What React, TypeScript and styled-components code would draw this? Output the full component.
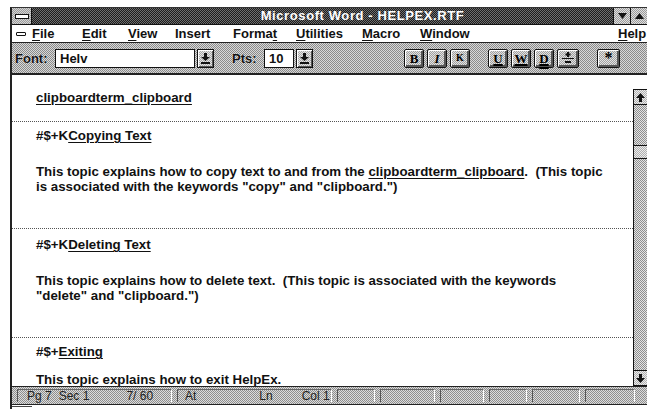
import React from 'react';
import styled, { createGlobalStyle, css } from 'styled-components';

// 1px checkerboard, the way Windows 3.x fakes mid greys
const dither = (a: string, b: string) => css`
  background: repeating-conic-gradient(${a} 0 25%, ${b} 0 50%) 0 0 / 2px 2px;
`;

const GlobalStyle = createGlobalStyle`
  html, body { margin: 0; padding: 0; background: #fff; }
  body {
    width: 647px;
    height: 409px;
    overflow: hidden;
    font-family: "Liberation Sans", Arial, sans-serif;
    font-weight: 700;
    font-size: 12px;
    color: #111;
  }
`;

const Screen = styled.div`
  width: 647px;
  height: 409px;
  padding: 7px 0 0 10px;
  box-sizing: border-box;
  overflow: hidden;
`;

const Frame = styled.div`
  width: 637px;
  flex-shrink: 0;
  box-sizing: border-box;
  border-left: 2px solid #222;
  border-top: 1px solid #333;
  display: flex;
  flex-direction: column;
`;

/* ─── title bar ─── */
const TitleBar = styled.div`
  height: 16px;
  display: flex;
  align-items: stretch;
  ${dither('#1c1c1c', '#6e6e6e')}
  border-bottom: 1px solid #111;
`;

const SysBox = styled.div`
  width: 19px;
  ${dither('#9a9a9a', '#d4d4d4')}
  border-right: 1px solid #111;
  display: flex;
  align-items: center;
  justify-content: center;

  &::after {
    content: '';
    width: 12px;
    height: 3px;
    background: #fff;
    border: 1px solid #111;
  }
`;

const Title = styled.div`
  flex: 1;
  color: #fff;
  text-align: center;
  line-height: 16px;
  padding-left: 80px;
  font-size: 13px;
  letter-spacing: 0.6px;
`;

const SizeBox = styled.div`
  width: 16px;
  ${dither('#9a9a9a', '#e0e0e0')}
  border-left: 1px solid #111;
  display: flex;
  align-items: center;
  justify-content: center;
`;

/* ─── menu bar ─── */
const MenuBar = styled.div`
  height: 17px;
  background: #fff;
  display: flex;
  align-items: center;
  border-bottom: 1px solid #222;
  padding: 0 0 0 3px;
`;

const MenuDash = styled.div`
  width: 17px;
  display: flex;
  padding-left: 1px;
  box-sizing: border-box;

  &::after {
    content: '';
    width: 8px;
    height: 2px;
    border: 1px solid #111;
    border-radius: 1px;
  }
`;

const MenuItem = styled.span<{ $w: number }>`
  width: ${(p) => p.$w}px;
  flex-shrink: 0;
  white-space: nowrap;
  font-size: 13px;
  u { text-decoration-thickness: 1px; text-underline-offset: 2px; }
`;

const Spacer = styled.div`
  flex: 1;
`;

/* ─── ribbon ─── */
const Ribbon = styled.div`
  height: 30px;
  display: flex;
  align-items: center;
  ${dither('#8a8a8a', '#d8d8d8')}
  border-bottom: 2px solid #222;
  padding-left: 3px;
`;

const Label = styled.span<{ $w: number }>`
  width: ${(p) => p.$w}px;
  font-size: 13px;
  color: #111;
  text-shadow: 0 0 1px #fff;
`;

const Field = styled.div<{ $w: number }>`
  width: ${(p) => p.$w}px;
  height: 19px;
  box-sizing: border-box;
  background: #fff;
  border: 1px solid #111;
  padding: 0 4px;
  line-height: 17px;
  font-size: 13px;
`;

const Drop = styled.div<{ $after: number }>`
  width: 17px;
  height: 19px;
  box-sizing: border-box;
  margin-left: 2px;
  margin-right: ${(p) => p.$after}px;
  ${dither('#a8a8a8', '#e6e6e6')}
  border: 1px solid #111;
  box-shadow: inset 1px 1px 0 #fff, inset -1px -1px 0 #555;
  display: flex;
  align-items: center;
  justify-content: center;
`;

const Btn = styled.div<{ $gap: number; $w?: number }>`
  width: ${(p) => p.$w || 20}px;
  height: 19px;
  box-sizing: border-box;
  margin-left: ${(p) => p.$gap}px;
  ${dither('#a0a0a0', '#e2e2e2')}
  border: 1px solid #111;
  border-radius: 2px;
  box-shadow: inset 1px 1px 0 #fff, inset -2px -2px 0 #555;
  display: flex;
  align-items: center;
  justify-content: center;
  font-size: 13px;
  line-height: 1;
  color: #000;
`;

const Glyph = styled.span<{ $deco?: string; $italic?: boolean }>`
  font-family: "Liberation Serif", "Times New Roman", serif;
  font-weight: 700;
  font-style: ${(p) => (p.$italic ? 'italic' : 'normal')};
  text-decoration: ${(p) => p.$deco || 'none'};
  text-decoration-thickness: 2px;
  text-underline-offset: 1px;
`;

/* ─── document ─── */
const Body = styled.div`
  display: flex;
  height: 311px;
`;

const Page = styled.div`
  flex: 1;
  background: #fff;
  display: flex;
  flex-direction: column;
  padding-top: 15px;
`;

const Para = styled.div<{ $rule?: boolean; $h: number; $top?: number }>`
  height: ${(p) => p.$h}px;
  flex-shrink: 0;
  box-sizing: border-box;
  padding: ${(p) => p.$top ?? 0}px 0 0 24px;
  border-top: ${(p) => (p.$rule ? '1px dotted #555' : 'none')};
  line-height: 15px;
  font-size: 13.3px;
`;

const Line = styled.div<{ $gap?: number }>`
  margin-top: ${(p) => p.$gap || 0}px;
  white-space: nowrap;
`;

const Link = styled.span`
  text-decoration: underline;
  text-decoration-thickness: 1px;
  text-underline-offset: 2px;
`;

const ScrollBar = styled.div`
  width: 13px;
  flex-shrink: 0;
  margin-top: 14px;
  border-left: 1px solid #111;
  display: flex;
  flex-direction: column;
  ${dither('#8e8e8e', '#e4e4e4')}
`;

const Arrow = styled.div`
  height: 14px;
  ${dither('#b0b0b0', '#ececec')}
  border-bottom: 1px solid #111;
  border-top: 1px solid #111;
  display: flex;
  align-items: center;
  justify-content: center;
`;

const Thumb = styled.div`
  height: 12px;
  margin-top: 40px;
  ${dither('#b0b0b0', '#ececec')}
  border-top: 1px solid #111;
  border-bottom: 1px solid #111;
`;

/* ─── status bar ─── */
const StatusBar = styled.div`
  height: 17px;
  display: flex;
  align-items: center;
  ${dither('#8e8e8e', '#dcdcdc')}
  border-top: 1px solid #222;
  border-bottom: 1px solid #222;
  font-weight: 400;
  font-size: 12px;
  color: #222;
`;

const Cell = styled.div<{ $w: number }>`
  width: ${(p) => p.$w}px;
  flex-shrink: 0;
  height: 13px;
  margin-left: 5px;
  box-sizing: border-box;
  border-left: 1px solid #555;
  border-top: 1px solid #666;
  border-right: 1px solid #fff;
  display: flex;
  align-items: center;
  line-height: 12px;
`;

const Stat = styled.span<{ $x: number }>`
  margin-left: ${(p) => p.$x}px;
  white-space: pre;
`;

const Foot = styled.div`
  height: 6px;
  &::before {
    content: '';
    display: block;
    width: 20px;
    height: 1px;
    margin-top: 1px;
    background: #444;
  }
`;

const Tri = ({ up }: { up?: boolean }) => (
  <svg width="9" height="6" viewBox="0 0 9 6">
    <path d={up ? 'M0 6 L4.5 0 L9 6 Z' : 'M0 0 L4.5 6 L9 0 Z'} fill="#111" />
  </svg>
);

const DropArrow = () => (
  <svg width="9" height="11" viewBox="0 0 9 11">
    <path d="M3 0h3v4h3L4.5 8 0 4h3z" fill="#111" />
    <rect x="0" y="9" width="9" height="2" fill="#111" />
  </svg>
);

const ScrollArrow = ({ up }: { up?: boolean }) => (
  <svg width="9" height="9" viewBox="0 0 9 9">
    <path d={up ? 'M4.5 0 L9 5 H6 V9 H3 V5 H0 Z' : 'M4.5 9 L9 4 H6 V0 H3 V4 H0 Z'} fill="#111" />
  </svg>
);

const SupSub = () => (
  <svg width="12" height="13" viewBox="0 0 12 13">
    <rect x="5" y="0" width="2" height="5" fill="#111" />
    <rect x="3.5" y="1.5" width="5" height="2" fill="#111" />
    <rect x="0" y="6" width="12" height="1" fill="#111" />
    <rect x="3" y="9" width="6" height="2" fill="#111" />
  </svg>
);

const emptyCells = [38, 55, 44, 38, 48, 50];

export default function App() {
  return (
    <>
      <GlobalStyle />
      <Screen>
        <Frame>
          <TitleBar>
            <SysBox />
            <Title>Microsoft Word - HELPEX.RTF</Title>
            <SizeBox>
              <Tri />
            </SizeBox>
            <SizeBox>
              <Tri up />
            </SizeBox>
          </TitleBar>

          <MenuBar>
            <MenuDash />
            <MenuItem $w={50}><u>F</u>ile</MenuItem>
            <MenuItem $w={46}><u>E</u>dit</MenuItem>
            <MenuItem $w={47}><u>V</u>iew</MenuItem>
            <MenuItem $w={58}>Insert</MenuItem>
            <MenuItem $w={63}>Forma<u>t</u></MenuItem>
            <MenuItem $w={66}><u>U</u>tilities</MenuItem>
            <MenuItem $w={58}><u>M</u>acro</MenuItem>
            <MenuItem $w={60}><u>W</u>indow</MenuItem>
            <Spacer />
            <MenuItem $w={29}><u>H</u>elp</MenuItem>
          </MenuBar>

          <Ribbon>
            <Label $w={40}>Font:</Label>
            <Field $w={140}>Helv</Field>
            <Drop $after={18}><DropArrow /></Drop>
            <Label $w={32}>Pts:</Label>
            <Field $w={30}>10</Field>
            <Drop $after={0}><DropArrow /></Drop>
            <Btn $gap={91}><Glyph>B</Glyph></Btn>
            <Btn $gap={3}><Glyph $italic>I</Glyph></Btn>
            <Btn $gap={3}><Glyph style={{ fontSize: 10 }}>K</Glyph></Btn>
            <Btn $gap={18}><Glyph $deco="underline">U</Glyph></Btn>
            <Btn $gap={3}><Glyph $deco="underline">W</Glyph></Btn>
            <Btn $gap={3}><Glyph $deco="underline double">D</Glyph></Btn>
            <Btn $gap={3} $w={22}><SupSub /></Btn>
            <Btn $gap={18} $w={23}><Glyph style={{ fontSize: 16 }}>*</Glyph></Btn>
          </Ribbon>

          <Body>
            <Page>
              <Para $h={31}>
                <Line><Link>clipboardterm_clipboard</Link></Line>
              </Para>
              <Para $rule $top={6} $h={107}>
                <Line>#$+K<Link>Copying Text</Link></Line>
                <Line $gap={21}>
                  This topic explains how to copy text to and from the <Link>clipboardterm_clipboard</Link>.&nbsp; (This topic
                </Line>
                <Line>is associated with the keywords "copy" and "clipboard.")</Line>
              </Para>
              <Para $rule $top={8} $h={109}>
                <Line>#$+K<Link>Deleting Text</Link></Line>
                <Line $gap={21}>
                  This topic explains how to delete text.&nbsp; (This topic is associated with the keywords
                </Line>
                <Line>"delete" and "clipboard.")</Line>
              </Para>
              <Para $rule $top={6} $h={49}>
                <Line>#$+<Link>Exiting</Link></Line>
                <Line $gap={13}>This topic explains how to exit HelpEx.</Line>
              </Para>
            </Page>
            <ScrollBar>
              <Arrow><ScrollArrow up /></Arrow>
              <Thumb />
              <Spacer />
              <Arrow><ScrollArrow /></Arrow>
            </ScrollBar>
          </Body>

          <StatusBar>
            <Cell $w={155}>
              <Stat $x={9}>Pg 7</Stat>
              <Stat $x={7}>Sec 1</Stat>
              <Stat $x={37}>7/ 60</Stat>
            </Cell>
            <Cell $w={155}>
              <Stat $x={7}>At</Stat>
              <Stat $x={63}>Ln</Stat>
              <Stat $x={29}>Col 1</Stat>
            </Cell>
            {emptyCells.map((w, i) => (
              <Cell key={i} $w={w} />
            ))}
          </StatusBar>
          <Foot />
        </Frame>
      </Screen>
    </>
  );
}
